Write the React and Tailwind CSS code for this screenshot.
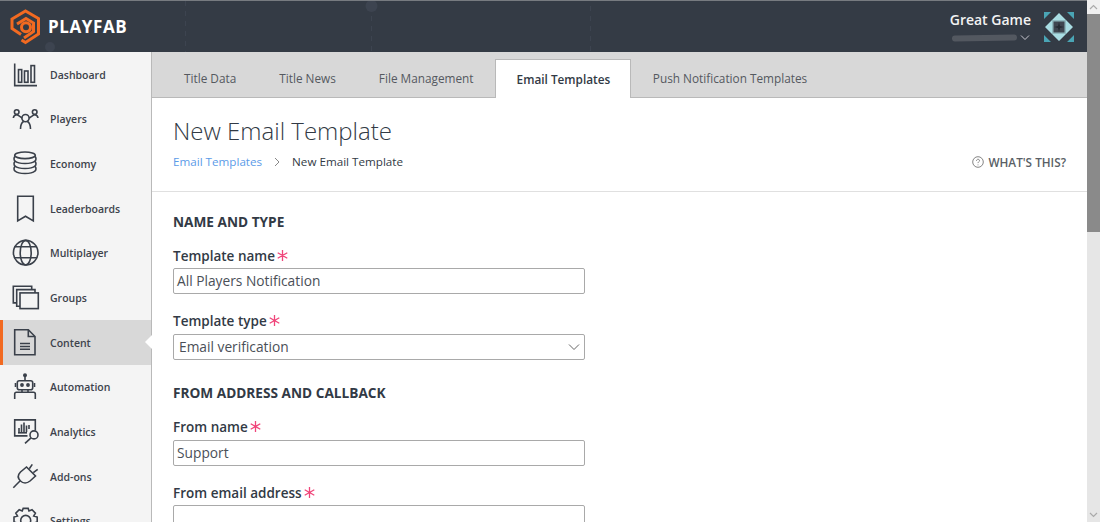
import React from "react";

const Icon = ({ children }) => (
  <svg width="40" height="40" viewBox="0 0 40 40" fill="none" stroke="#3a404a" strokeWidth="1.6" className="shrink-0">
    {children}
  </svg>
);

const navItems = [
  {
    label: "Dashboard",
    icon: (
      <>
        <path d="M3.700 8.600v22h22.300" />
        <rect x="7.500" y="14.600" width="3.200" height="12.700" />
        <rect x="13.500" y="16" width="3.500" height="11.300" />
        <rect x="20" y="10.600" width="3.500" height="16.700" />
      </>
    ),
  },
  {
    label: "Players",
    icon: (
      <>
        <circle cx="5.700" cy="13.100" r="2.300" />
        <circle cx="23.700" cy="13.100" r="2.300" />
        <circle cx="14.500" cy="19.100" r="3.600" />
        <path d="M2.300 19c.3-2 1.700-3.300 3.400-3.300 1.500 0 2.500 1 5.500 3.500M27 19c-.3-2-1.700-3.300-3.300-3.300-1.500 0-2.500 1-5.500 3.500" />
        <path d="M9.500 30c0-4 1.500-6.500 3-7.500M19.500 30c0-4-1.500-6.500-3-7.500" />
      </>
    ),
  },
  {
    label: "Economy",
    icon: (
      <>
        <ellipse cx="14" cy="11.300" rx="10.300" ry="3.300" />
        <path d="M4 12.500c-1.300 1-1.300 3.500 0 4.500 2 1.800 5.500 2.500 10 2.500s8-.7 10-2.500c1.300-1 1.300-3.500 0-4.500" />
        <path d="M4 17.500c-1.300 1-1.300 3.500 0 4.500 2 1.800 5.500 2.500 10 2.500s8-.7 10-2.500c1.300-1 1.300-3.500 0-4.500" />
        <path d="M4 22.500c-1.300 1-1.300 3.500 0 4.500 2 1.800 5.500 2.500 10 2.500s8-.7 10-2.500c1.300-1 1.300-3.500 0-4.500" />
      </>
    ),
  },
  {
    label: "Leaderboards",
    icon: <path d="M6.700 7.200h15.600v24.700l-7.800-4.700-7.800 4.700z" />,
  },
  {
    label: "Multiplayer",
    icon: (
      <>
        <circle cx="14.700" cy="19.700" r="12.300" />
        <ellipse cx="14.700" cy="19.700" rx="5.500" ry="12.300" />
        <path d="M3.500 13.700h22.400M3.500 24.700h22.400" />
      </>
    ),
  },
  {
    label: "Groups",
    icon: (
      <>
        <path d="M5.700 24.900H2.300V8.300h18.400v3.300" />
        <path d="M9 28.300H5.700V11.600H24v3.300" />
        <rect x="9" y="14.900" width="18.300" height="15.700" />
      </>
    ),
  },
  {
    label: "Content",
    active: true,
    icon: (
      <>
        <path d="M3.700 6.800h13.600l6.700 6.700v18.300H3.700z" />
        <path d="M17.300 6.800v6.700H24" />
        <path d="M9 20.500h10M9 23.500h10M9 26.200h10" strokeWidth="1.400" />
      </>
    ),
  },
  {
    label: "Automation",
    icon: (
      <>
        <rect x="6.300" y="13.700" width="15.400" height="9" rx="2" />
        <path d="M14 13.500V9.500M4.500 16v4M23.500 16v4M11 22.700v2.600M17 22.700v2.600" />
        <circle cx="14" cy="8.300" r="1.200" fill="#3a404a" />
        <circle cx="11" cy="18" r="1.100" fill="#3a404a" />
        <circle cx="17" cy="18" r="1.100" fill="#3a404a" />
        <path d="M3.700 32v-5c0-1.100.6-1.700 1.700-1.700h17.200c1.100 0 1.700.6 1.700 1.700v5" />
      </>
    ),
  },
  {
    label: "Analytics",
    icon: (
      <>
        <path d="M16.500 23.900H3.700V7.900h20.600v10.500" />
        <path d="M8 20v-4M10.500 20v-7.500M13 20v-9.500M15.500 20v-6.500M18 17v-4" />
        <path d="M7 20.800h9" />
        <circle cx="23" cy="22.900" r="4" />
        <path d="M20 25.800l-6 5.600" />
      </>
    ),
  },
  {
    label: "Add-ons",
    icon: (
      <>
        <path d="M2.300 30.700L9 24" />
        <path d="M15.500 10l9 9-5.500 5c-3 2.500-7 2.500-9.500 0-3-3-2.500-6.500 0-9z" />
        <path d="M18.300 11.700l3-4.300M22.300 15.700l4.400-3.300" />
      </>
    ),
  },
  {
    label: "Settings",
    icon: (
      <g transform="translate(.7 -1.600)">
        <circle cx="14" cy="20" r="5" />
        <path d="M11.500 8h5l.8 2.500 3-1.200 3.400 3.400-1.700 3 3.500 1v5l-3.500 1 1.700 3-3.400 3.400-3-1.700-.8 3.500h-5l-1-3.500-3 1.700-3.400-3.400 1.700-3-3.500-1v-5l3.500-1-1.700-3 3.400-3.400 3 1.200z" />
      </g>
    ),
  },
];

const tabs = ["Title Data", "Title News", "File Management", "Email Templates", "Push Notification Templates"];

const Star = () => (
  <svg width="11" height="11" viewBox="0 0 11 11" fill="none" stroke="#f0457a" strokeWidth="1.300" className="ml-[2px] -translate-y-[1px]">
    <path d="M5.500 0v11M.7 2.700l9.600 5.600M.7 8.300l9.600-5.600" />
  </svg>
);

const Field = ({ label, value, select, className, inputGap }) => (
  <div className={className}>
    <div className="flex items-center h-[22px] text-[13.500px] font-semibold text-[#323a45] leading-[22px]">
      {label}
      <Star />
    </div>
    <div className={`${inputGap} w-[412px] h-[26px] bg-white border border-[#a9a9a9] rounded-[2px] flex items-center justify-between text-[13.750px] text-[#4a4f57] pl-[3px] pr-[4px]`}>
      <span className={select ? "pl-[2px]" : ""}>{value}</span>
      {select && (
        <svg width="12" height="8" viewBox="0 0 12 8" fill="none" stroke="#666" strokeWidth="1">
          <path d="M1 1.500l5 5 5-5" />
        </svg>
      )}
    </div>
  </div>
);

export default function App() {
  return (
    <div className="w-[1100px] h-[522px] overflow-hidden flex bg-white text-[#323a45]" style={{ fontFamily: '"Open Sans", sans-serif' }}>
      <div className="flex-1 min-w-0 flex flex-col">
        <header className="relative h-[52px] shrink-0 bg-[#343b45] border-t-[1px] border-[#777b80] flex items-center justify-between pl-[10px] pr-[13px]">
          <svg width="1087" height="51" className="absolute left-0 top-0" fill="none" stroke="#3d4450" strokeWidth="1">
            <circle cx="371.500" cy="5" r="6" fill="#3d4450" stroke="none" />
            <circle cx="50" cy="46" r="5" fill="#3d4450" stroke="none" />
            <path d="M185.500 0v51M371.500 15v36M590.500 5v46" strokeDasharray="5 5" />
          </svg>
          <div className="relative flex items-center gap-[6px] mt-[1px]">
            <svg width="32" height="36" viewBox="0 0 32 36" fill="none" stroke="#f26a21" strokeWidth="3">
              <path d="M11.500 31l4 2.500 13-8.500V9.500L15.500 2 2 10v9.500l9 6" />
              <path d="M7 15l9-5.500 7.500 4.500v8.500L14 29" />
              <circle cx="16" cy="18.300" r="4.500" />
            </svg>
            <span className="text-white font-bold text-[17px] tracking-[0.6px]">PLAYFAB</span>
          </div>
          <div className="relative flex items-center gap-[13px]">
            <div className="flex flex-col items-end">
              <span className="text-[#f2f2f2] text-[14px] font-semibold leading-[20px]">Great Game</span>
              <div className="flex items-center gap-[3px] h-[12px] mt-[2px] pr-[1px]">
                <div className="w-[65px] h-[6px] bg-[#535860] rounded-full -rotate-[1deg]" />
                <svg width="10" height="6" viewBox="0 0 10 6" fill="none" stroke="#c8c8d0" strokeWidth="1">
                  <path d="M1 .5l4 4 4-4" />
                </svg>
              </div>
            </div>
            <svg width="30" height="30" viewBox="0 0 30 30">
              <path d="M0 0h7L0 7zM30 0h-7l7 7zM0 30h7l-7-7zM30 30h-7l7-7z" fill="#4aa5b5" />
              <path d="M15 1l7 7H8zM15 29l7-7H8zM1 15l7-7v14zM29 15l-7-7v14z" fill="#a9dde3" />
              <rect x="8" y="8" width="14" height="14" fill="#8fb9bf" />
              <rect x="9.500" y="9.500" width="11" height="11" fill="#3f4650" />
              <path d="M15 10l1 4 4 1-4 1-1 4-1-4-4-1 4-1z" fill="#252b33" />
            </svg>
          </div>
        </header>
        <div className="flex-1 min-h-0 flex">
          <nav className="relative w-[152px] shrink-0 bg-[#f4f4f4] border-r border-[#b9b9b9] pt-[0.300px]">
            {navItems.map((item) => (
              <div
                key={item.label}
                className={`relative h-[44.700px] flex items-center pl-[11px] ${item.active ? "bg-[#d8d8d8]" : ""}`}
              >
                {item.active && <div className="absolute left-0 top-0 bottom-0 w-[3px] bg-[#f26a21]" />}
                <Icon>{item.icon}</Icon>
                <span className="text-[10.500px] font-semibold text-[#3d434c] -ml-[1px] pt-[1.500px]">{item.label}</span>
                {item.active && (
                  <div className="absolute right-[-1px] top-[15px] w-0 h-0 border-y-[7px] border-y-transparent border-r-[7px] border-r-white" />
                )}
              </div>
            ))}
          </nav>
          <main className="flex-1 min-w-0">
            <div className="h-[46px] bg-[#d8d8d8] border-b border-[#b9b9b9] flex items-end pl-[10.500px]">
              {tabs.map((tab) => (
                <div
                  key={tab}
                  className={
                    tab === "Email Templates"
                      ? "h-[39px] -mb-[1px] pl-[20.500px] pr-[20px] pt-[11px] bg-white border border-b-0 border-[#b9b9b9] text-[11.800px] font-semibold text-[#323a45]"
                      : "h-[39px] px-[21.500px] pt-[12px] text-[11.800px] text-[#55595f]"
                  }
                >
                  {tab}
                </div>
              ))}
            </div>
            <div className="h-[94px] border-b border-[#e0e0e0] px-[21px] pt-[16px] flex flex-col">
              <h1 className="text-[24px] font-light leading-[34px] text-[#323a45]">New Email Template</h1>
              <div className="flex items-center justify-between mt-[5px] text-[11.650px] leading-[18px]">
                <div className="flex items-center">
                  <span className="text-[#5b9be8]">Email Templates</span>
                  <svg width="6" height="10" viewBox="0 0 6 10" fill="none" stroke="#888" strokeWidth="1" className="mx-[12px]">
                    <path d="M1 1l4 4-4 4" />
                  </svg>
                  <span className="text-[#323a45]">New Email Template</span>
                </div>
                <div className="flex items-center gap-[4px] text-[11.750px] font-semibold text-[#5a5f66]">
                  <svg width="12" height="12" viewBox="0 0 12 12" fill="none" stroke="#666" strokeWidth="0.800">
                    <circle cx="6" cy="6" r="5.300" />
                    <path d="M4.500 4.800c0-2 3-2 3-.2 0 1.200-1.500 1.200-1.500 2.500M6 8.500v.8" />
                  </svg>
                  WHAT'S THIS?
                </div>
              </div>
            </div>
            <div className="pl-[21px] pt-[20px]">
              <h2 className="text-[13.650px] font-bold leading-[20px] text-[#323a45]">NAME AND TYPE</h2>
              <Field className="mt-[13px]" inputGap="mt-px" label="Template name" value="All Players Notification" />
              <Field className="mt-[16px]" inputGap="mt-[2px]" label="Template type" value="Email verification" select />
              <h2 className="mt-[23px] text-[13.650px] font-bold leading-[20px] text-[#323a45]">FROM ADDRESS AND CALLBACK</h2>
              <Field className="mt-[13px]" inputGap="mt-[2px]" label="From name" value="Support" />
              <Field className="mt-[16px]" inputGap="mt-px" label="From email address" value="" />
            </div>
          </main>
        </div>
      </div>
      <div className="w-[13px] shrink-0 bg-[#e6e6e6] flex flex-col items-center">
        <div className="h-[14px] w-full bg-[#f0f0f0] flex items-center justify-center">
          <svg width="9" height="6" viewBox="0 0 9 6" fill="none" stroke="#aaa" strokeWidth="1.200">
            <path d="M1 5l3.500-3.500L8 5" />
          </svg>
        </div>
        <div className="h-[218px] w-full bg-[#8a8a8a]" />
        <div className="flex-1" />
        <div className="h-[14px] flex items-center justify-center">
          <svg width="9" height="6" viewBox="0 0 9 6" fill="none" stroke="#aaa" strokeWidth="1.200">
            <path d="M1 1l3.500 3.500L8 1" />
          </svg>
        </div>
      </div>
    </div>
  );
}
